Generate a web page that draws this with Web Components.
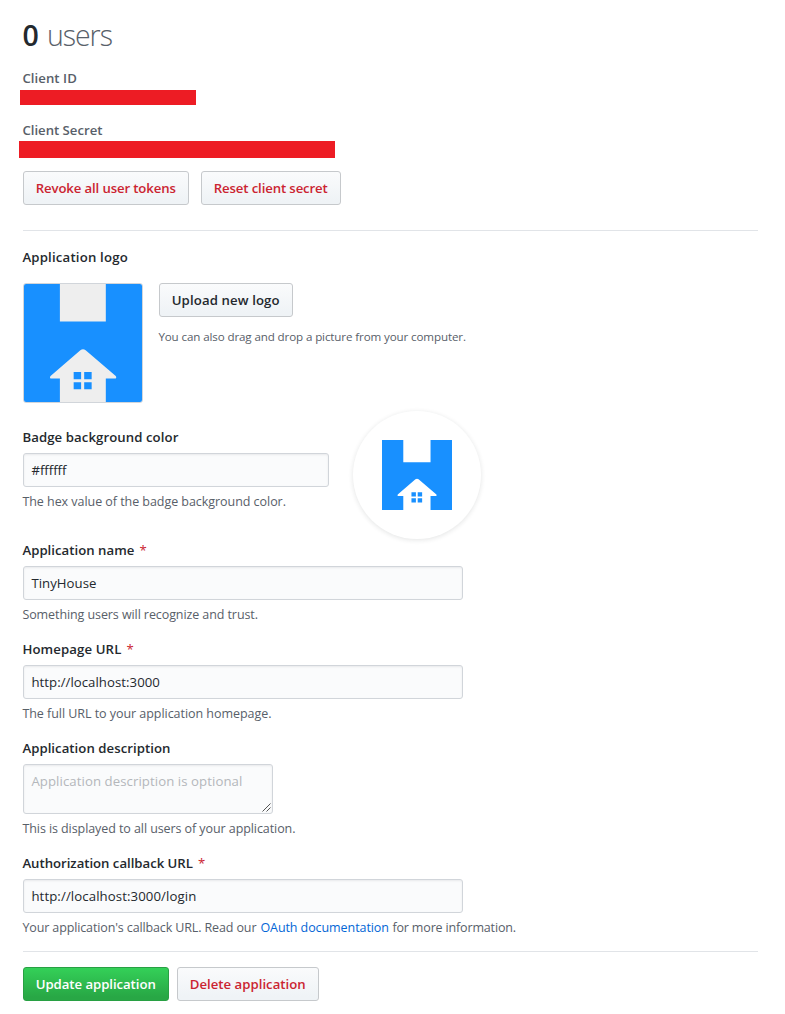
<!DOCTYPE html>
<html lang="en">
<head>
<meta charset="utf-8">
<title>OAuth application settings</title>
<style>
html,body{margin:0;background:#fff}
body{font-family:"Open Sans","Noto Sans",sans-serif;color:#24292e}
</style>
</head>
<body>
<settings-page></settings-page>
<script>
const define = (name, html, setup) => customElements.define(name, class extends HTMLElement {
  connectedCallback() {
    if (this.shadowRoot) return;
    const t = document.createElement('template');
    t.innerHTML = html;
    this.attachShadow({ mode: 'open' }).append(t.content.cloneNode(true));
    if (setup) setup(this, this.shadowRoot);
  }
});

/* A run of text tracked to a given advance width. */
define('fit-text', `<style>:host{display:inline-block;white-space:pre}span{white-space:pre;margin-left:-.6px}</style><span><slot></slot></span>`,
  (host, root) => {
    const w = +host.getAttribute('w');
    const now = root.querySelector('span').getBoundingClientRect().width;
    const n = host.textContent.length;
    host.style.letterSpacing = ((w - now) / n).toFixed(4) + 'px';
    host.style.width = w + 'px';
  });

define('house-logo', `<style>:host{display:block}svg{display:block;width:100%;height:100%}</style>
<svg viewBox="0 0 120 120"><path fill="#1890ff" d="M0 0h120v120H0z"/>
<path fill="currentColor" d="M36.5 0h46.7v38.2H36.5zM57.3 67.3Q60 65.2 62.7 67.3L93.3 93.6Q94.8 96.2 92 96.2H83.2V120H36.5V96.2H28.2Q25.4 96.2 27 93.6z"/>
<path fill="#1890ff" d="M50.5 89.5h7.6v7.3h-7.6zM61.2 89.5h7.6v7.3h-7.6zM50.5 99.8h7.6v7.3h-7.6zM61.2 99.8h7.6v7.3h-7.6z"/></svg>`);

define('ui-button', `<style>
:host{display:block}
button{display:block;box-sizing:border-box;height:34px;margin:0;padding:0 12px;border:1px solid #c6c9cc;border-radius:3px;
background:linear-gradient(#fafbfc,#eff3f6 90%);font:600 13.2px/32px "Open Sans","Noto Sans",sans-serif;color:#24292e}
:host([kind=danger]) button{color:#cb2431}
:host([kind=primary]) button{color:#fff;border-color:#28a043;background:linear-gradient(#34d058,#28a745 90%)}
</style><button type="button"><slot></slot></button>`);

define('ui-label', `<style>:host{display:block;height:21px;font-size:13.2px;font-weight:600;line-height:21px}
i{font-style:normal;font-weight:400;color:#cb2431;margin-left:4.4px}</style><slot></slot>`,
  (host, root) => {
    if (host.hasAttribute('required')) { const i = document.createElement('i'); i.textContent = '*'; root.append(i); }
  });

define('redacted-bar', `<style>:host{display:block;background:#ed1c24}</style>`);

define('form-field', `<style>
:host{display:block}
.box{box-sizing:border-box;width:var(--w,440px);height:var(--h,34px);margin:5px 0 4px;padding:0 8px;border:1px solid #d1d5da;border-radius:3px;
background:#fafbfc;box-shadow:inset 0 1px 2px rgba(27,31,35,.075);font-size:13.2px;line-height:32px;position:relative}
.note{height:21px;font-size:12.5px;line-height:21px;color:#586069;white-space:nowrap}
svg{display:none;position:absolute;right:1px;bottom:1px}
:host([area]) svg{display:block}
:host([area]) .box{color:#b4b7bb}
</style><slot name="label"></slot><div class="box"><slot></slot>
<svg width="9" height="9" viewBox="0 0 9 9"><path d="M.5 8.5l8-8M4.5 8.5l4-4" stroke="#555" fill="none"/></svg></div>
<div class="note"><slot name="note"></slot></div>`);

define('settings-page', `<style>
:host{display:block;box-sizing:border-box;width:785px;height:1014px;padding:17px 27px 0 23px;overflow:hidden}
h1{display:flex;height:36px;margin:0 0 15px;font-size:28.5px;line-height:36px;font-weight:600}
h1 .u{font-weight:300;color:#586069;margin-left:8px}
.muted{color:#586069}
.id{width:176px;height:15px;margin:1px 0 15px -3px}
.sec{width:316px;height:17px;margin:0 0 13px -4px}
.row{display:flex}
hr{height:1px;border:0;margin:0;background:#e1e4e8}
.logo{box-sizing:border-box;width:120px;height:120px;border:1px solid #d1d5da;border-radius:3px;overflow:hidden;color:#eee;margin-right:16px}
.drag{font-size:11.6px;line-height:18px;color:#586069;margin-top:11px}
.badge{box-sizing:border-box;width:128px;height:128px;margin:-16px 0 0 24px;padding:29px;border-radius:50%;background:#fff;color:#fff;box-shadow:0 1px 5px rgba(27,31,35,.12)}
.fields{display:flex;flex-direction:column;gap:14px}
a{color:#0366d6;text-decoration:none}
</style>
<h1><fit-text w="16.5">0</fit-text><fit-text class="u" w="65">users</fit-text></h1>
<ui-label class="muted"><fit-text w="54.5">Client ID</fit-text></ui-label>
<redacted-bar class="id"></redacted-bar>
<ui-label class="muted"><fit-text w="80">Client Secret</fit-text></ui-label>
<redacted-bar class="sec"></redacted-bar>
<div class="row" style="gap:12px;margin-bottom:25px">
<ui-button kind="danger"><fit-text w="140">Revoke all user tokens</fit-text></ui-button>
<ui-button kind="danger"><fit-text w="114">Reset client secret</fit-text></ui-button></div>
<hr style="margin-bottom:16px">
<ui-label style="margin-bottom:15px"><fit-text w="105.5">Application logo</fit-text></ui-label>
<div class="row" style="margin-bottom:24px"><house-logo class="logo"></house-logo>
<div><ui-button><fit-text w="108">Upload new logo</fit-text></ui-button>
<div class="drag"><fit-text w="307.5">You can also drag and drop a picture from your computer.</fit-text></div></div></div>
<div class="row" style="height:113px">
<form-field style="--w:306px"><ui-label slot="label"><fit-text w="156">Badge background color</fit-text></ui-label><fit-text w="35">#ffffff</fit-text><fit-text slot="note" w="263.5">The hex value of the badge background color.</fit-text></form-field>
<div class="badge"><house-logo></house-logo></div></div>
<div class="fields">
<form-field><ui-label slot="label" required><fit-text w="112">Application name</fit-text></ui-label><fit-text w="65">TinyHouse</fit-text><fit-text slot="note" w="235.5">Something users will recognize and trust.</fit-text></form-field>
<form-field><ui-label slot="label" required><fit-text w="99">Homepage URL</fit-text></ui-label><fit-text w="128.5">http://localhost:3000</fit-text><fit-text slot="note" w="249">The full URL to your application homepage.</fit-text></form-field>
<form-field area style="--w:250px;--h:50px"><ui-label slot="label"><fit-text w="148">Application description</fit-text></ui-label><fit-text w="211">Application description is optional</fit-text><fit-text slot="note" w="273">This is displayed to all users of your application.</fit-text></form-field>
<form-field><ui-label slot="label" required><fit-text w="170.5">Authorization callback URL</fit-text></ui-label><fit-text w="165">http://localhost:3000/login</fit-text><span slot="note"><fit-text w="234">Your application's callback URL. Read our</fit-text><a style="margin:0 3.5px 0 4px"><fit-text w="128.5">OAuth documentation</fit-text></a><fit-text w="123.5">for more information.</fit-text></span></form-field>
</div>
<hr style="margin:13px 0 15px">
<div class="row" style="gap:8px"><ui-button kind="primary"><fit-text w="120">Update application</fit-text></ui-button><ui-button kind="danger"><fit-text w="116">Delete application</fit-text></ui-button></div>
`);
</script>
</body>
</html>
